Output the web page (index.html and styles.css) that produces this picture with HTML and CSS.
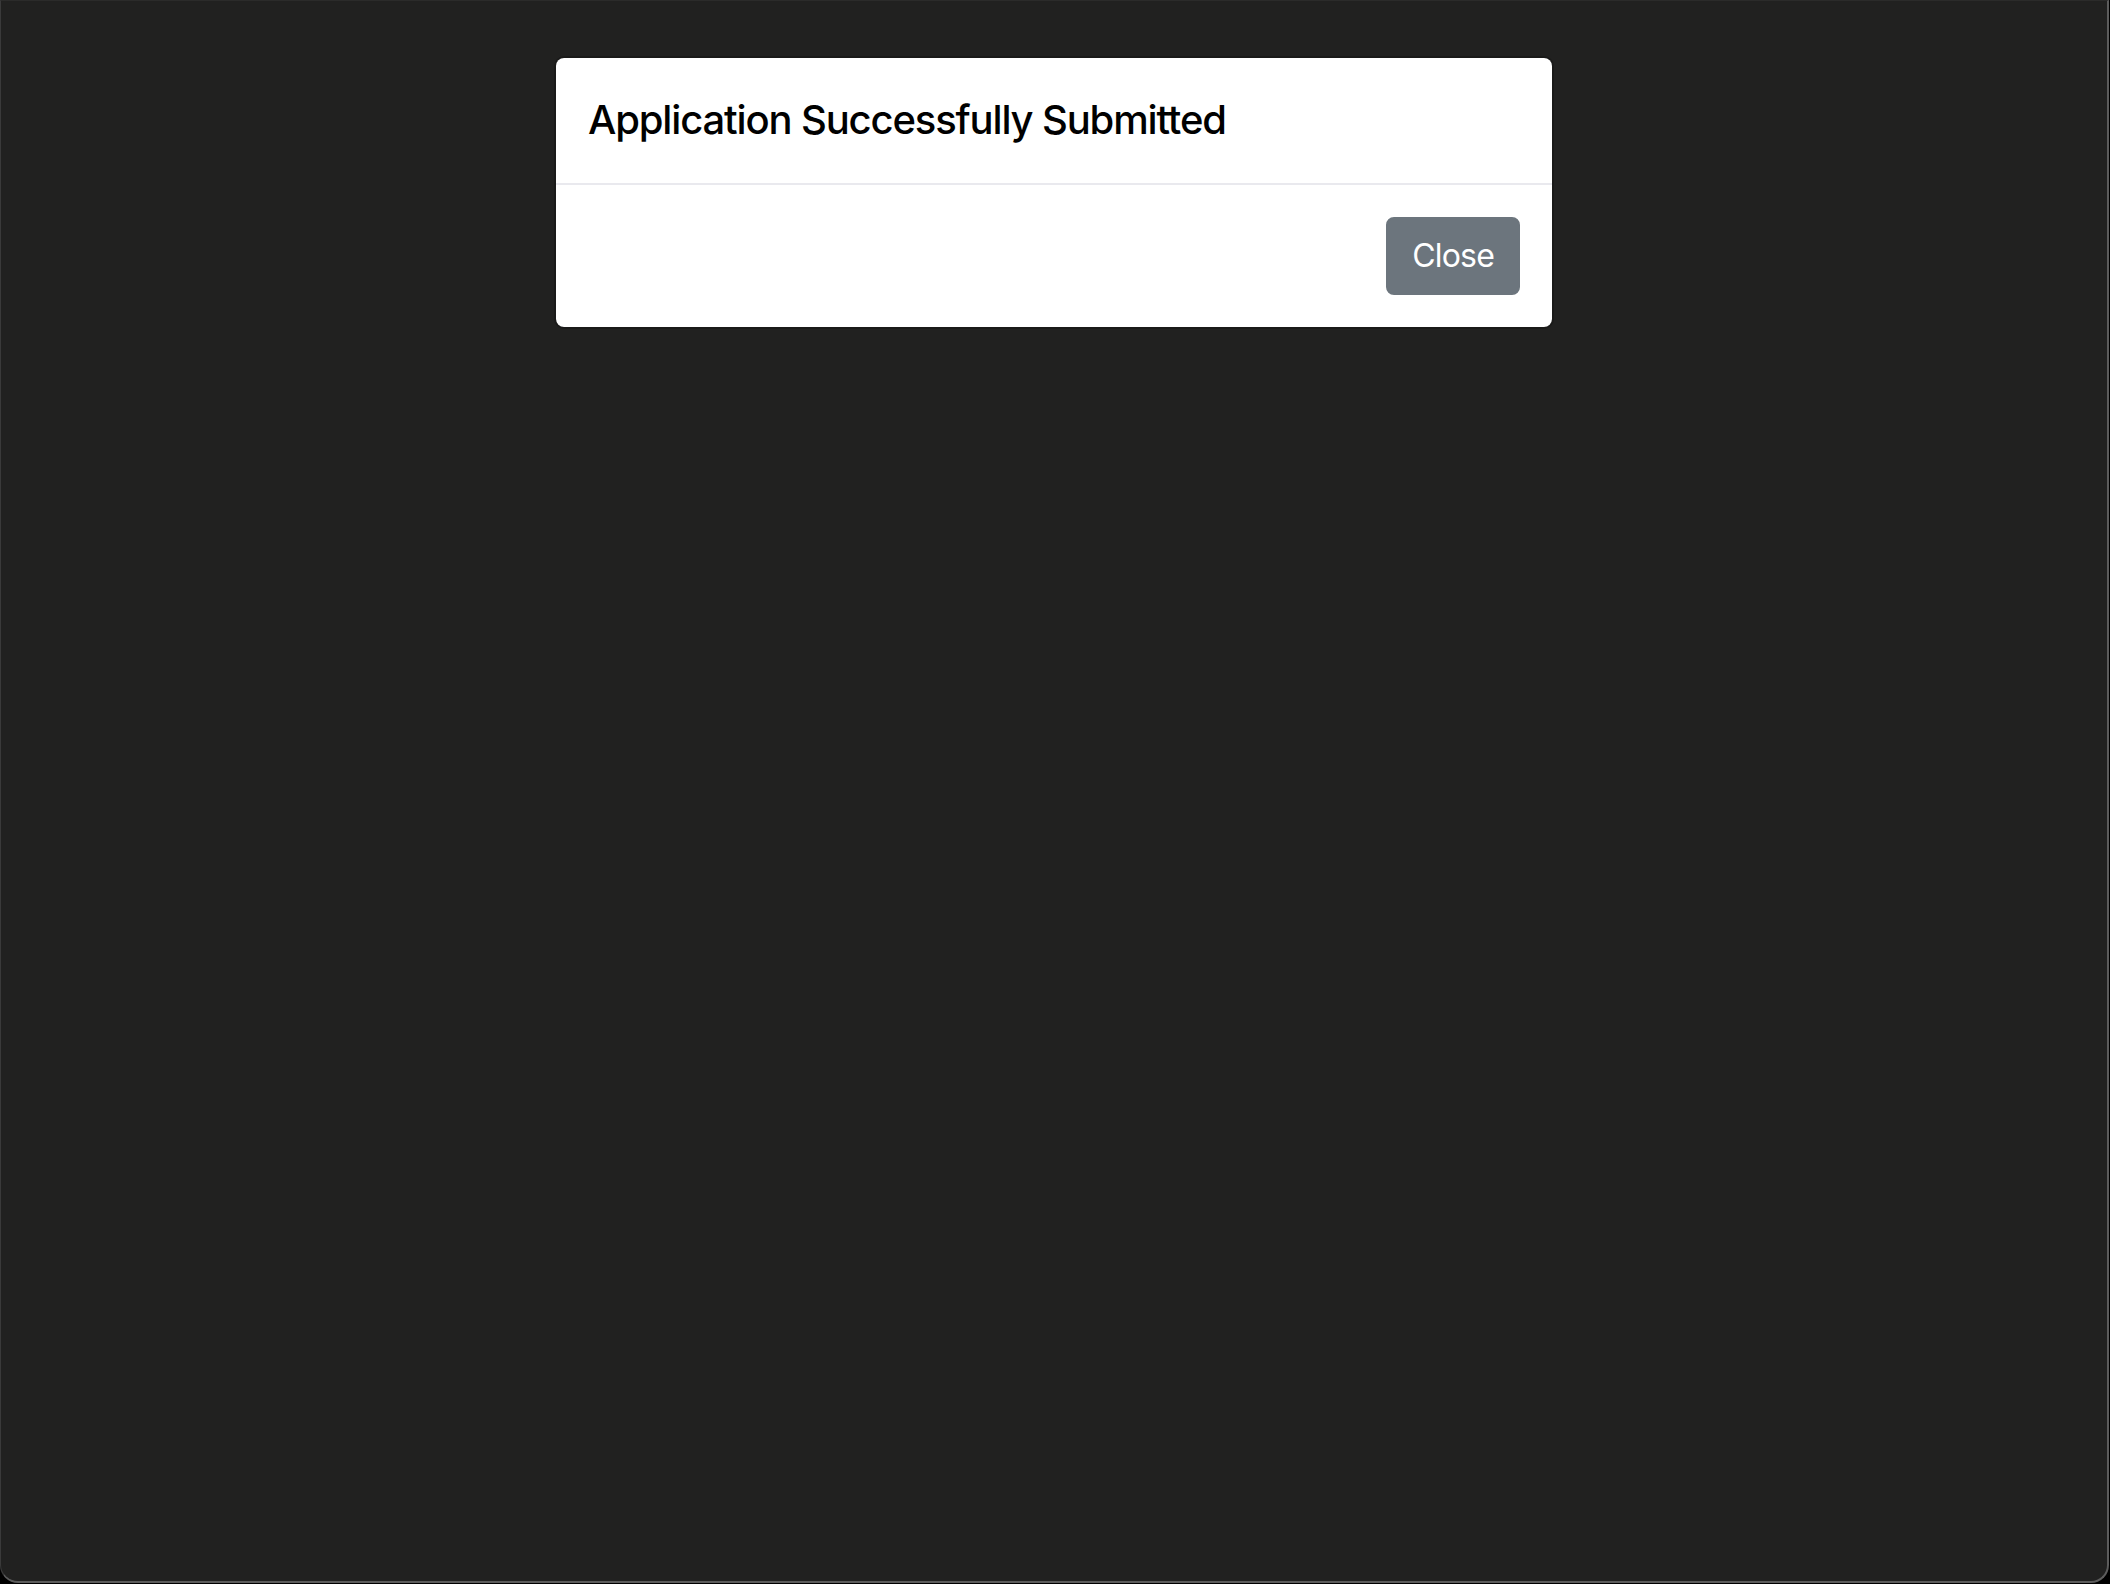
FILE: index.html
```html
<!DOCTYPE html>
<html lang="en">
<head>
<meta charset="utf-8">
<title>Application Successfully Submitted</title>
<link rel="stylesheet" href="styles.css">
</head>
<body>
<div class="window">
  <div class="modal">
    <div class="modal-header">
      <h5 class="modal-title">Application Successfully Submitted</h5>
    </div>
    <div class="modal-footer">
      <button type="button" class="btn">Close</button>
    </div>
  </div>
</div>
</body>
</html>
```

FILE: styles.css
```css
html, body {
  margin: 0;
  padding: 0;
  background: #000;
}
body {
  font-family: Inter, "Liberation Sans", sans-serif;
  width: 2110px;
  height: 1584px;
  overflow: hidden;
}
.window {
  box-sizing: border-box;
  width: 2109px;
  height: 1583px;
  background: #212120;
  border-top: 1px solid #2b2b2a;
  border-right: 2px solid #5c5c5c;
  border-bottom: 2px solid #5c5c5c;
  border-left: 1px solid #3a3a3a;
  border-radius: 0 0 18px 18px;
  padding-top: 55px;
}
.modal {
  box-sizing: border-box;
  width: 1000px;
  margin: 0 auto;
  background: #fff;
  border: 2px solid rgba(0, 0, 0, 0.2);
  background-clip: padding-box;
  border-radius: 10px;
}
.modal-header {
  padding: 32px 32px 33px;
  border-bottom: 2px solid #e9e9ee;
}
.modal-title {
  margin: 0;
  font-size: 40px;
  line-height: 60px;
  font-weight: 500;
  color: #000;
  letter-spacing: -1.15px;
}
.modal-footer {
  display: flex;
  justify-content: flex-end;
  padding: 24px;
}
.btn {
  margin: 8px;
  font-family: inherit;
  font-size: 32px;
  line-height: 50px;
  padding: 12px 24px;
  border: 2px solid #6c757d;
  border-radius: 8px;
  background: #6c757d;
  color: #fff;
  font-weight: 400;
  letter-spacing: -0.8px;
}
```
